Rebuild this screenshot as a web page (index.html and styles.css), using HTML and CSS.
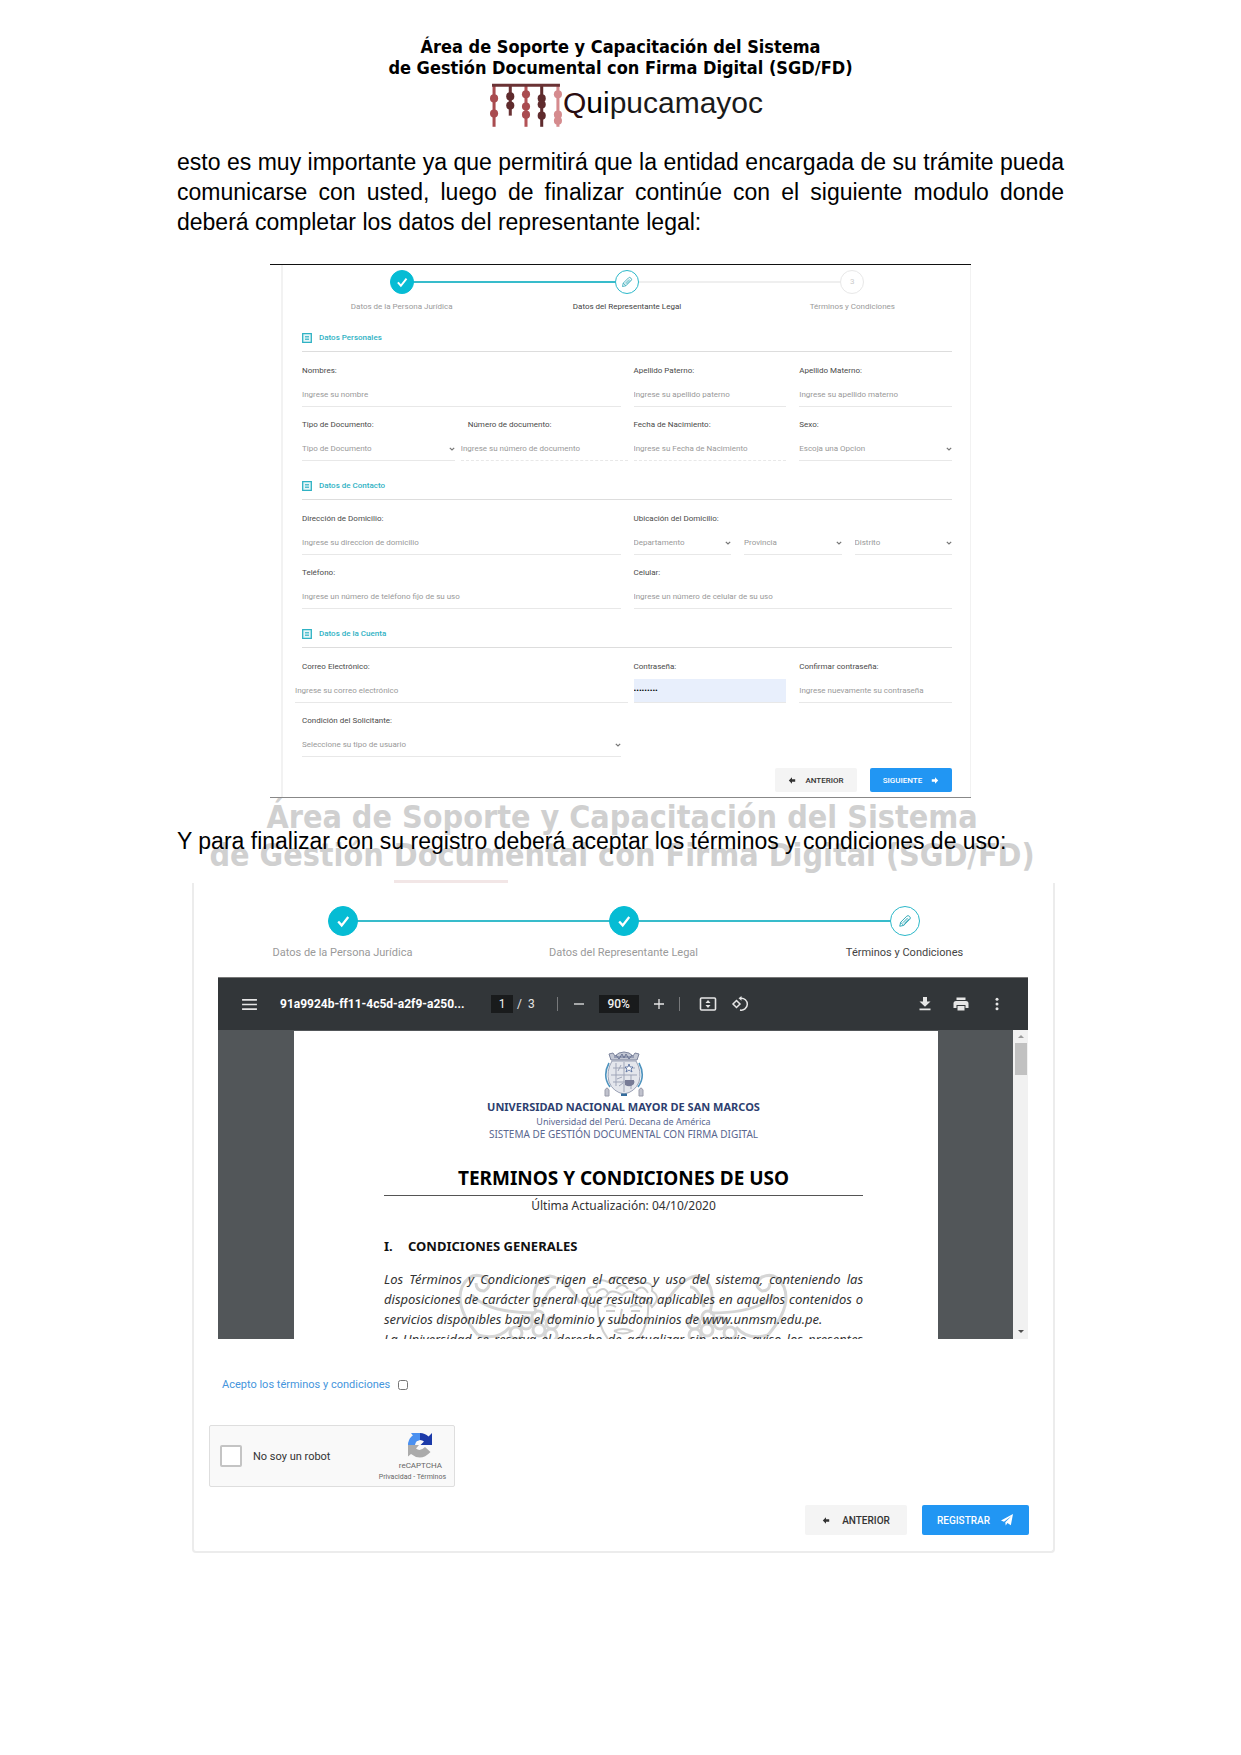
FILE: index.html
```html
<!DOCTYPE html>
<html lang="es">
<head>
<meta charset="utf-8">
<meta name="viewport" content="width=device-width, initial-scale=1">
<title>Guía de registro - Quipucamayoc</title>
<link rel="stylesheet" href="styles.css">
</head>
<body>
<svg class="defs" aria-hidden="true">
  <symbol id="check" viewBox="0 0 16 16"><path d="M2.500 8.500 L6.500 13 L14 3.500" fill="none" stroke="currentColor" stroke-width="2.600"/></symbol>
  <symbol id="pencil" viewBox="0 0 16 16"><path d="M2 14 L3 9.500 L10 2.500 Q11.500 1 13.200 2.800 Q15 4.500 13.500 6 L6.500 13 Z M3 9.500 L6.500 13 M5.500 10 L11 4.500 M7 11 L12.500 5.500" fill="none" stroke="currentColor" stroke-width="1.100"/></symbol>
  <symbol id="list" viewBox="0 0 10 10"><path d="M.700 .700 H9.300 V9.300 H.700 Z" fill="#e6f6f8" stroke="currentColor" stroke-width="1.300"/><path d="M3 3.500 H7 M3 5 H7 M3 6.500 H7" stroke="currentColor" stroke-width=".8"/></symbol>
  <symbol id="chevron" viewBox="0 0 6 4"><path d="M.800 .800 L3 3 L5.200 .800" fill="none" stroke="currentColor" stroke-width="1.200"/></symbol>
  <symbol id="left" viewBox="0 0 10 8"><path d="M1 4 L5 0 V2.500 H9 V5.500 H5 V8 Z" fill="currentColor"/></symbol>
  <symbol id="right" viewBox="0 0 10 8"><path d="M9 4 L5 0 V2.500 H1 V5.500 H5 V8 Z" fill="currentColor"/></symbol>
</svg>

<header class="masthead">
  <p class="masthead-title">Área de Soporte y Capacitación del Sistema<br>de Gestión Documental con Firma Digital (SGD/FD)</p>
  <div class="brand">
    <svg class="quipu" viewBox="0 0 72 44" aria-hidden="true">
      <g stroke-width="3">
        <path d="M4 2 V43" stroke="#a94c50"/><path d="M20 2 V32" stroke="#6a3234"/><path d="M35.500 2 V43" stroke="#b35256"/><path d="M51 2 V43" stroke="#5f2b2d"/><path d="M67 2 V43" stroke="#d58b8e"/>
      </g>
      <path d="M2 2 H69" stroke="#6a3234" stroke-width="3"/>
      <g fill="#a94c50"><circle cx="4" cy="15" r="4"/><circle cx="4" cy="30" r="4"/><circle cx="35.500" cy="11" r="4"/><circle cx="35.500" cy="23" r="4"/><circle cx="35.500" cy="31" r="4"/></g>
      <g fill="#5f2b2d"><circle cx="20" cy="13" r="4"/><circle cx="20" cy="22" r="4"/><circle cx="51" cy="15" r="4"/><circle cx="51" cy="21" r="4"/><circle cx="51" cy="32" r="4"/></g>
      <g fill="#d58b8e"><circle cx="67" cy="11" r="4"/><circle cx="67" cy="31" r="4"/><circle cx="67" cy="37" r="4"/></g>
    </svg>
    <span class="brand-name"><span class="brand-q">Q</span><span class="brand-ui">ui</span>pucamayoc</span>
  </div>
</header>

<main class="page">
  <p class="text justified">esto es muy importante ya que permitirá que la entidad encargada de su trámite pueda comunicarse con usted, luego de finalizar continúe con el siguiente modulo donde deberá completar los datos del representante legal:</p>

  <section class="figure figure-form">
    <form class="panel">
      <ol class="steps">
        <li class="step done"><span class="dot"><svg><use href="#check"/></svg></span>Datos de la Persona Jurídica</li>
        <li class="step current"><span class="dot"><svg><use href="#pencil"/></svg></span>Datos del Representante Legal</li>
        <li class="step"><span class="dot">3</span>Términos y Condiciones</li>
      </ol>

      <fieldset class="group">
        <legend class="group-title"><svg><use href="#list"/></svg>Datos Personales</legend>
        <div class="fields">
          <div class="field half"><label for="nombres">Nombres:</label><input id="nombres" placeholder="Ingrese su nombre"></div>
          <div class="field"><label for="paterno">Apellido Paterno:</label><input id="paterno" placeholder="Ingrese su apellido paterno"></div>
          <div class="field"><label for="materno">Apellido Materno:</label><input id="materno" placeholder="Ingrese su apellido materno"></div>
          <div class="field"><label for="tipo">Tipo de Documento:</label><span class="select"><select id="tipo"><option>Tipo de Documento</option></select><svg><use href="#chevron"/></svg></span></div>
          <div class="field outset"><label for="numero">Número de documento:</label><input id="numero" class="dashed" placeholder="Ingrese su número de documento"></div>
          <div class="field"><label for="fecha">Fecha de Nacimiento:</label><input id="fecha" class="dashed" placeholder="Ingrese su Fecha de Nacimiento"></div>
          <div class="field"><label for="sexo">Sexo:</label><span class="select"><select id="sexo"><option>Escoja una Opcion</option></select><svg><use href="#chevron"/></svg></span></div>
        </div>
      </fieldset>

      <fieldset class="group">
        <legend class="group-title"><svg><use href="#list"/></svg>Datos de Contacto</legend>
        <div class="fields">
          <div class="field half"><label for="direccion">Dirección de Domicilio:</label><input id="direccion" placeholder="Ingrese su direccion de domicilio"></div>
          <div class="field half"><label for="departamento">Ubicación del Domicilio:</label>
            <div class="places">
              <span class="select"><select id="departamento"><option>Departamento</option></select><svg><use href="#chevron"/></svg></span>
              <span class="select"><select aria-label="Provincia"><option>Provincia</option></select><svg><use href="#chevron"/></svg></span>
              <span class="select"><select aria-label="Distrito"><option>Distrito</option></select><svg><use href="#chevron"/></svg></span>
            </div>
          </div>
          <div class="field half"><label for="telefono">Teléfono:</label><input id="telefono" placeholder="Ingrese un número de teléfono fijo de su uso"></div>
          <div class="field half"><label for="celular">Celular:</label><input id="celular" placeholder="Ingrese un número de celular de su uso"></div>
        </div>
      </fieldset>

      <fieldset class="group">
        <legend class="group-title"><svg><use href="#list"/></svg>Datos de la Cuenta</legend>
        <div class="fields">
          <div class="field half outset"><label for="correo">Correo Electrónico:</label><input id="correo" placeholder="Ingrese su correo electrónico"></div>
          <div class="field"><label for="clave">Contraseña:</label><input id="clave" class="filled" type="password" value="quipu2020"></div>
          <div class="field"><label for="clave2">Confirmar contraseña:</label><input id="clave2" placeholder="Ingrese nuevamente su contraseña"></div>
          <div class="field half"><label for="condicion">Condición del Solicitante:</label><span class="select"><select id="condicion"><option>Seleccione su tipo de usuario</option></select><svg><use href="#chevron"/></svg></span></div>
        </div>
      </fieldset>

      <div class="actions">
        <button type="button" class="btn"><svg><use href="#left"/></svg>ANTERIOR</button>
        <button type="button" class="btn primary">SIGUIENTE<svg><use href="#right"/></svg></button>
      </div>
    </form>
  </section>

  <div class="closing">
    <p class="watermark" aria-hidden="true">Área de Soporte y Capacitación del Sistema<br>de Gestión Documental con Firma Digital (SGD/FD)</p>
    <p class="text">Y para finalizar con su registro deberá aceptar los términos y condiciones de uso:</p>
    <span class="watermark-bar"></span>
  </div>

  <section class="figure-terms">
    <ol class="steps large">
      <li class="step done"><span class="dot"><svg><use href="#check"/></svg></span>Datos de la Persona Jurídica</li>
      <li class="step done"><span class="dot"><svg><use href="#check"/></svg></span>Datos del Representante Legal</li>
      <li class="step current"><span class="dot"><svg><use href="#pencil"/></svg></span>Términos y Condiciones</li>
    </ol>

    <div class="viewer">
      <div class="toolbar">
        <svg class="ico menu" viewBox="0 0 16 14"><path d="M0 2 H16 M0 7 H16 M0 12 H16" stroke="currentColor" stroke-width="1.700"/></svg>
        <strong class="file">91a9924b-ff11-4c5d-a2f9-a250...</strong>
        <span class="page-no">1</span><span class="page-count">/&nbsp; 3</span>
        <span class="bar"></span>
        <svg class="ico small" viewBox="0 0 12 12"><path d="M1 6 H11" stroke="currentColor" stroke-width="1.300"/></svg>
        <span class="zoom">90%</span>
        <svg class="ico small" viewBox="0 0 12 12"><path d="M1 6 H11 M6 1 V11" stroke="currentColor" stroke-width="1.300"/></svg>
        <span class="bar near"></span>
        <svg class="ico fit" viewBox="0 0 18 16"><rect x="1.500" y="2" width="15" height="12" rx="1" fill="none" stroke="currentColor" stroke-width="1.600"/><path d="M6.500 7 L9 4 L11.500 7 Z M6.500 9 L9 12 L11.500 9 Z" fill="currentColor"/></svg>
        <svg class="ico turn" viewBox="0 0 18 16"><path d="M5.500 4.500 L9 8 L5.500 11.500 L2 8 Z" fill="none" stroke="currentColor" stroke-width="1.500"/><path d="M9.500 2.200 A6 6 0 1 1 9 14" fill="none" stroke="currentColor" stroke-width="1.500"/><path d="M10.500 0 V4.800 L7.500 2.300 Z" fill="currentColor"/></svg>
        <span class="spacer"></span>
        <svg class="ico tool" viewBox="0 0 16 16"><path d="M6 1 H10 V5.500 H13.500 L8 10.800 L2.500 5.500 H6 Z M2.500 12.600 H13.500 V14.200 H2.500 Z" fill="currentColor"/></svg>
        <svg class="ico tool" viewBox="0 0 16 16"><path d="M3.500 1.500 H12.500 V4 H3.500 Z M3 5 H13 Q15.500 5 15.500 7.500 V12 H12.500 V9 H3.500 V12 H.500 V7.500 Q.500 5 3 5 Z M4.500 10 H11.500 V14.500 H4.500 Z" fill="currentColor"/></svg>
        <svg class="ico tool" viewBox="0 0 16 16"><g fill="currentColor"><circle cx="8" cy="3.300" r="1.500"/><circle cx="8" cy="8" r="1.500"/><circle cx="8" cy="12.700" r="1.500"/></g></svg>
      </div>
      <div class="stage">
        <article class="sheet">
          <svg class="crest" viewBox="0 0 40 46" aria-hidden="true">
            <path d="M5 3 L9 2 L11 5 L15 2 L20 1 L25 2 L29 5 L31 2 L35 3 L33 9 H7 Z" fill="#c4c8d4" stroke="#7c849d"/>
            <path d="M10 6 H30 M12 4 L15 8 L18 3 L20 7 L22 3 L25 8 L28 4" fill="none" stroke="#6b7594"/>
            <path d="M5 12 Q-2 25 6 36 M35 12 Q42 25 34 36" fill="none" stroke="#4e93be" stroke-width="1.600"/>
            <path d="M8 10 H32 Q38 20 35 31 Q31 41 20 43 Q9 41 5 31 Q2 20 8 10 Z" fill="#e4e6ec" stroke="#9aa1b5"/>
            <path d="M9 17 H31 M7 24 H33 M9 31 H31 M20 11 V41 M12 12 V35 M27 24 V38 M14 20 L17 14 M13 28 L18 26 M15 35 L19 32" fill="none" stroke="#9fa5b8"/>
            <path d="M25 13 L26 16 L29 16 L27 18 L28 21 L25 19 L22 21 L23 18 L21 16 L24 16 Z" fill="#fff" stroke="#4d6699" stroke-width=".8"/>
            <path d="M21 29 H30 V33 Q26 37 21 34 Z" fill="#777b96"/>
            <path d="M1 39 Q3 35 5 39 V45 H1 Z M35 39 Q37 35 39 39 V45 H35 Z" fill="#c0c2cd" stroke="#9a9caa"/>
            <path d="M17 42.500 H23 V45 H17 Z" fill="#356c9c"/>
          </svg>
          <p class="uni">UNIVERSIDAD NACIONAL MAYOR DE SAN MARCOS</p>
          <p class="motto">Universidad del Perú. Decana de América</p>
          <p class="system">SISTEMA DE GESTIÓN DOCUMENTAL CON FIRMA DIGITAL</p>
          <h1>TERMINOS Y CONDICIONES DE USO</h1>
          <p class="updated">Última Actualización: 04/10/2020</p>
          <h2><span class="num">I.</span>CONDICIONES GENERALES</h2>
          <div class="clause">
            <svg class="ornament" viewBox="0 0 330 66" aria-hidden="true">
              <g fill="none" stroke="#d6d6d6" stroke-width="3">
                <g id="vine">
                  <path d="M20 62 Q-4 34 4 14 Q12 -2 26 4 Q36 12 26 18 Q18 18 18 10"/>
                  <path d="M14 22 Q30 40 78 40 M78 40 Q70 8 92 3 Q108 6 122 30 M84 34 Q90 14 98 14 M20 62 Q40 68 52 54"/>
                  <circle cx="68" cy="50" r="6"/><circle cx="80" cy="44" r="6"/><circle cx="81" cy="57" r="6"/><circle cx="94" cy="50" r="6"/><circle cx="93" cy="62" r="6"/><circle cx="58" cy="60" r="6"/>
                </g>
                <use href="#vine" transform="matrix(-1 0 0 1 330 0)"/>
              </g>
              <g fill="none" stroke="#cfcfcf" stroke-width="2">
                <path d="M140 28 Q138 50 150 66 M190 28 Q192 50 180 66"/>
                <path d="M136 34 Q124 30 132 22 Q124 14 138 14 Q140 4 150 9 Q158 0 166 7 Q176 1 182 10 Q196 8 194 18 Q204 24 194 34 Q188 24 180 24 Q172 14 164 22 Q152 14 148 24 Q140 24 136 34 Z"/>
                <path d="M138 20 Q146 12 150 20 M158 16 Q164 8 170 16 M178 18 Q184 10 190 20"/>
                <path d="M146 34 Q152 30 158 34 M172 34 Q178 30 184 34 M148 38 H157 M173 38 H182 M164 36 L161 50 H169 M156 58 Q165 54 174 58 Q165 63 156 58"/>
              </g>
            </svg>
            <p>Los Términos y Condiciones rigen el acceso y uso del sistema, conteniendo las disposiciones de carácter general que resultan aplicables en aquellos contenidos o servicios disponibles bajo el dominio y subdominios de www.unmsm.edu.pe.</p>
            <p>La Universidad se reserva el derecho de actualizar sin previo aviso los presentes términos y condiciones.</p>
          </div>
        </article>
        <div class="scroll" aria-hidden="true">
          <svg viewBox="0 0 8 6"><path d="M1 5 L4 2 L7 5 Z" fill="#9a9a9a"/></svg>
          <span class="thumb"></span>
          <svg viewBox="0 0 8 6"><path d="M1 1 L4 4 L7 1 Z" fill="#505050"/></svg>
        </div>
      </div>
    </div>

    <div class="accept"><label for="acepto">Acepto los términos y condiciones</label><input id="acepto" type="checkbox"></div>

    <div class="captcha">
      <input id="robot" type="checkbox"><label for="robot">No soy un robot</label>
      <div class="captcha-brand">
        <svg viewBox="0 0 26 26" aria-hidden="true">
          <path d="M1 13 A12 12 0 0 1 13 1 V8 Q9 8 8 13 Z" fill="#4a90f0"/>
          <path d="M4 1 H13 V8 L10 9 Z" fill="#4a90f0"/>
          <path d="M13 1 Q18 1 21.500 4.500 L25 1 V13 H13.500 L17 9.500 Q15.500 8 13 8 Z" fill="#1c3aa9"/>
          <path d="M1 13 H12 L9 16.500 Q13 20 18 15 L23.500 20 Q14 30 4 22 L1 24.500 Z" fill="#ababab"/>
        </svg>
        <span class="captcha-name">reCAPTCHA</span>
        <span class="captcha-links"><a href="#">Privacidad</a> - <a href="#">Términos</a></span>
      </div>
    </div>

    <div class="actions large">
      <button type="button" class="btn"><svg><use href="#left"/></svg>ANTERIOR</button>
      <button type="button" class="btn primary">REGISTRAR<svg class="plane" viewBox="0 0 14 14"><path d="M14 0 L11.500 13 L7.500 10.500 L5.500 13.500 L5 9.500 L12 2.500 L3.500 9 L0 7.500 Z" fill="currentColor"/></svg></button>
    </div>
  </section>
</main>
</body>
</html>
```
FILE: styles.css
```css
* { box-sizing: border-box; }

body {
  margin: 0;
  padding: 36px 0 200px;
  background: #fff;
  color: #000;
  font-family: "Liberation Sans", Arial, sans-serif;
}

p, h1, h2, ol, fieldset { margin: 0; padding: 0; border: 0; }
.defs { display: none; }

/* Letterhead */
.masthead { text-align: center; }
.masthead-title {
  font: bold 18px/21px "DejaVu Sans Condensed", "DejaVu Sans", sans-serif;
}
.brand {
  display: flex;
  justify-content: center;
  align-items: flex-start;
  margin-top: 5px;
  padding-left: 12px;
}
.quipu { width: 73px; height: 45px; }
.brand-name { font-size: 30px; line-height: 40px; color: #1a1a1a; }
.brand-q { color: #2a0c10; }
.brand-ui { color: #000; }

/* Document text */
.page { padding: 0 177px; }
.text { font-size: 23px; line-height: 30px; }
.justified { margin-top: 19px; text-align: justify; }

/* First form */
.figure-form {
  margin: 27px 93px 0;
  padding-left: 11px;
  border-top: 1px solid #111;
  border-bottom: 1px solid #888;
}
.panel {
  padding: 5px 18px 5px 19px;
  border-left: 2px solid #f2f2f2;
  border-right: 1px solid #f2f2f2;
  font-family: Roboto, sans-serif;
  font-size: 8px;
}

.steps {
  display: grid;
  grid-template-columns: repeat(3, 1fr);
  margin: 0 -13px;
  list-style: none;
  font: 8px/12px Roboto, sans-serif;
  color: #9a9a9a;
}
.step {
  position: relative;
  display: flex;
  flex-direction: column;
  align-items: center;
  gap: 7px;
}
.step:not(:last-child)::after {
  content: "";
  position: absolute;
  top: 11px;
  left: 50%;
  width: 100%;
  height: 2px;
  background: #efefef;
}
.step.done:not(:last-child)::after { background: #38bccb; }
.dot {
  position: relative;
  z-index: 1;
  display: grid;
  place-items: center;
  width: 24px;
  height: 24px;
  border: 1px solid #e8e8e8;
  border-radius: 50%;
  background: #fff;
  color: #ccc;
}
.dot svg { width: 12px; height: 12px; }
.done .dot { border-color: #06bcd4; background: #06bcd4; color: #fff; }
.current { color: #444; }
.current .dot { border-color: #2bb8c9; color: #2ba5b5; }

.group { min-width: 0; margin-top: 19px; }
.group-title {
  display: flex;
  align-items: center;
  gap: 7px;
  width: 100%;
  height: 20px;
  padding: 0 0 7px;
  border-bottom: 1px solid #ddd;
  line-height: 12px;
  font-weight: 500;
  color: #2fb2c4;
}
.group-title svg { width: 10px; height: 10px; }
.fields {
  display: grid;
  grid-template-columns: repeat(4, 1fr);
  gap: 12px 13px;
  padding-top: 13px;
}
.field { display: flex; flex-direction: column; gap: 6px; min-width: 0; }
.field label { line-height: 12px; color: #4a4a4a; }
.half { grid-column: span 2; }
.field input, .field select {
  width: 100%;
  height: 24px;
  padding: 0;
  border: 0;
  border-bottom: 1px solid #e8e8e8;
  border-radius: 0;
  background: none;
  font: 8px Roboto, sans-serif;
  color: #999;
  appearance: none;
}
.field input::placeholder { color: #999; opacity: 1; }
.field input.dashed { border-bottom-style: dashed; }
.field input.filled { background: #e8effc; color: #000; }
.outset input { align-self: center; width: calc(100% + 14px); }
.select { display: grid; align-items: center; }
.select > * { grid-area: 1 / 1; }
.select svg { justify-self: end; width: 6px; height: 4px; color: #777; pointer-events: none; }
.places { display: grid; grid-template-columns: repeat(3, 1fr); gap: 13px; }

.actions { display: flex; justify-content: flex-end; gap: 13px; margin-top: 11px; }
.btn {
  display: flex;
  align-items: center;
  justify-content: center;
  gap: 9px;
  width: 82px;
  height: 24px;
  padding: 0;
  border: 0;
  border-radius: 2px;
  background: #f4f4f4;
  color: #333;
  font: 500 8px Roboto, sans-serif;
}
.btn svg { width: 8px; height: 7px; }
.btn.primary { background: #2196f3; color: #fff; }

/* Closing line, printed over the page watermark */
.closing { position: relative; z-index: 1; padding: 28px 0 27px; }
.closing .text { position: relative; white-space: nowrap; }
.watermark {
  position: absolute;
  top: 0;
  left: 0;
  right: -3px;
  display: flex;
  justify-content: center;
  text-align: center;
  white-space: nowrap;
  font: bold 32px/38px "DejaVu Sans Condensed", "DejaVu Sans", sans-serif;
  color: #d0d0d0;
}
.watermark-bar {
  position: absolute;
  bottom: 0;
  left: 217px;
  width: 114px;
  height: 3px;
  background: #f2e6e6;
}

/* Terms card */
.figure-terms {
  margin: 0 9px 0 15px;
  padding: 23px 24px 16px;
  border: solid #ececec;
  border-width: 0 2px 2px;
  border-radius: 0 0 4px 4px;
  font-family: Roboto, sans-serif;
}
.steps.large { margin: 0 -16px; font-size: 11px; }
.large .step { gap: 11px; }
.large .step::after { top: 14px; }
.large .dot { width: 30px; height: 30px; }
.large .dot svg { width: 14px; height: 14px; }

.viewer { margin: 18px 1px 0 0; }
.toolbar {
  display: flex;
  align-items: center;
  height: 53px;
  padding: 0 23px 0 24px;
  border-top: 1px solid #777;
  background: #323639;
  color: #e6e6e6;
  font-size: 12px;
}
.ico { flex: none; height: 16px; }
.menu { width: 15px; height: 13px; }
.file { margin-left: 23px; width: 211px; font-size: 12px; font-weight: bold; color: #fff; }
.page-no, .zoom { height: 18px; line-height: 18px; text-align: center; background: #191b1c; color: #f0f0f0; }
.page-no { width: 22px; }
.page-count { margin-left: 4px; }
.bar { width: 1px; height: 14px; margin: 0 15px 0 22px; background: #77797b; }
.bar.near { margin: 0 19px 0 14px; }
.small { width: 12px; height: 12px; }
.zoom { width: 40px; margin: 0 14px; font-weight: 500; }
.fit, .turn { width: 18px; }
.turn { margin-left: 14px; }
.spacer { flex: 1; }
.tool { width: 16px; margin-left: 20px; }

.stage { display: flex; height: 309px; background: #525659; overflow: hidden; }
.sheet {
  flex: 1;
  height: 100%;
  margin: 1px 75px 0 76px;
  padding: 20px 75px 0 90px;
  overflow: hidden;
  background: #fff;
  color: #333;
  text-align: center;
  font-family: "Noto Sans", "Open Sans", sans-serif;
}
.crest { display: block; width: 40px; height: 46px; margin: 0 auto; }
.uni { margin-top: 2px; font-size: 11px; line-height: 16px; font-weight: bold; color: #2e3f70; white-space: nowrap; }
.motto, .system { line-height: 13px; color: #5a678f; white-space: nowrap; }
.motto { font-size: 9px; }
.system { font-size: 10px; }
.sheet h1 { margin-top: 24px; padding-bottom: 4px; border-bottom: 1px solid #555; font-size: 19px; line-height: 26px; color: #000; }
.updated { font-size: 12px; line-height: 20px; }
.sheet h2 { display: flex; margin-top: 20px; font-size: 13px; line-height: 20px; color: #111; }
.num { width: 24px; text-align: left; }
.clause { position: relative; margin-top: 13px; text-align: justify; font-style: italic; font-size: 13px; line-height: 20px; }
.clause p { position: relative; }
.ornament { position: absolute; top: 4px; left: 74px; width: 330px; height: 66px; }
.scroll {
  display: flex;
  flex-direction: column;
  align-items: center;
  width: 15px;
  padding: 3px 0 4px;
  background: #f1f1f1;
}
.scroll svg { width: 8px; height: 6px; }
.thumb { width: 12px; height: 32px; margin: 4px 0 auto; background: #c1c1c1; }

.accept { display: flex; align-items: center; gap: 8px; margin: 38px 0 0 4px; font-size: 11px; line-height: 16px; color: #4595dc; }
.accept input { width: 10px; height: 10px; margin: 0; }

.captcha {
  display: flex;
  align-items: center;
  width: 246px;
  height: 62px;
  margin: 32px 0 0 -9px;
  padding: 0 8px 0 10px;
  border: 1px solid #dedede;
  border-radius: 2px;
  background: #f9f9f9;
  font-size: 11px;
  color: #333;
}
.captcha input {
  width: 22px;
  height: 22px;
  margin: 0 11px 0 0;
  border: 2px solid #c4c4c4;
  border-radius: 2px;
  background: #fff;
  appearance: none;
}
.captcha-brand { display: flex; flex-direction: column; align-items: center; margin-left: auto; color: #666; }
.captcha-brand svg { width: 26px; height: 26px; margin-left: 16px; }
.captcha-name { margin-left: 16px; font-size: 8px; line-height: 15px; }
.captcha-links { font-size: 7px; line-height: 8px; }
.captcha-links a { color: inherit; text-decoration: none; }

.actions.large { gap: 15px; margin-top: 18px; }
.large .btn { width: 102px; height: 30px; gap: 12px; font-size: 10px; }
.large .primary { width: 107px; gap: 10px; }
.large .plane { width: 14px; height: 12px; }
```
